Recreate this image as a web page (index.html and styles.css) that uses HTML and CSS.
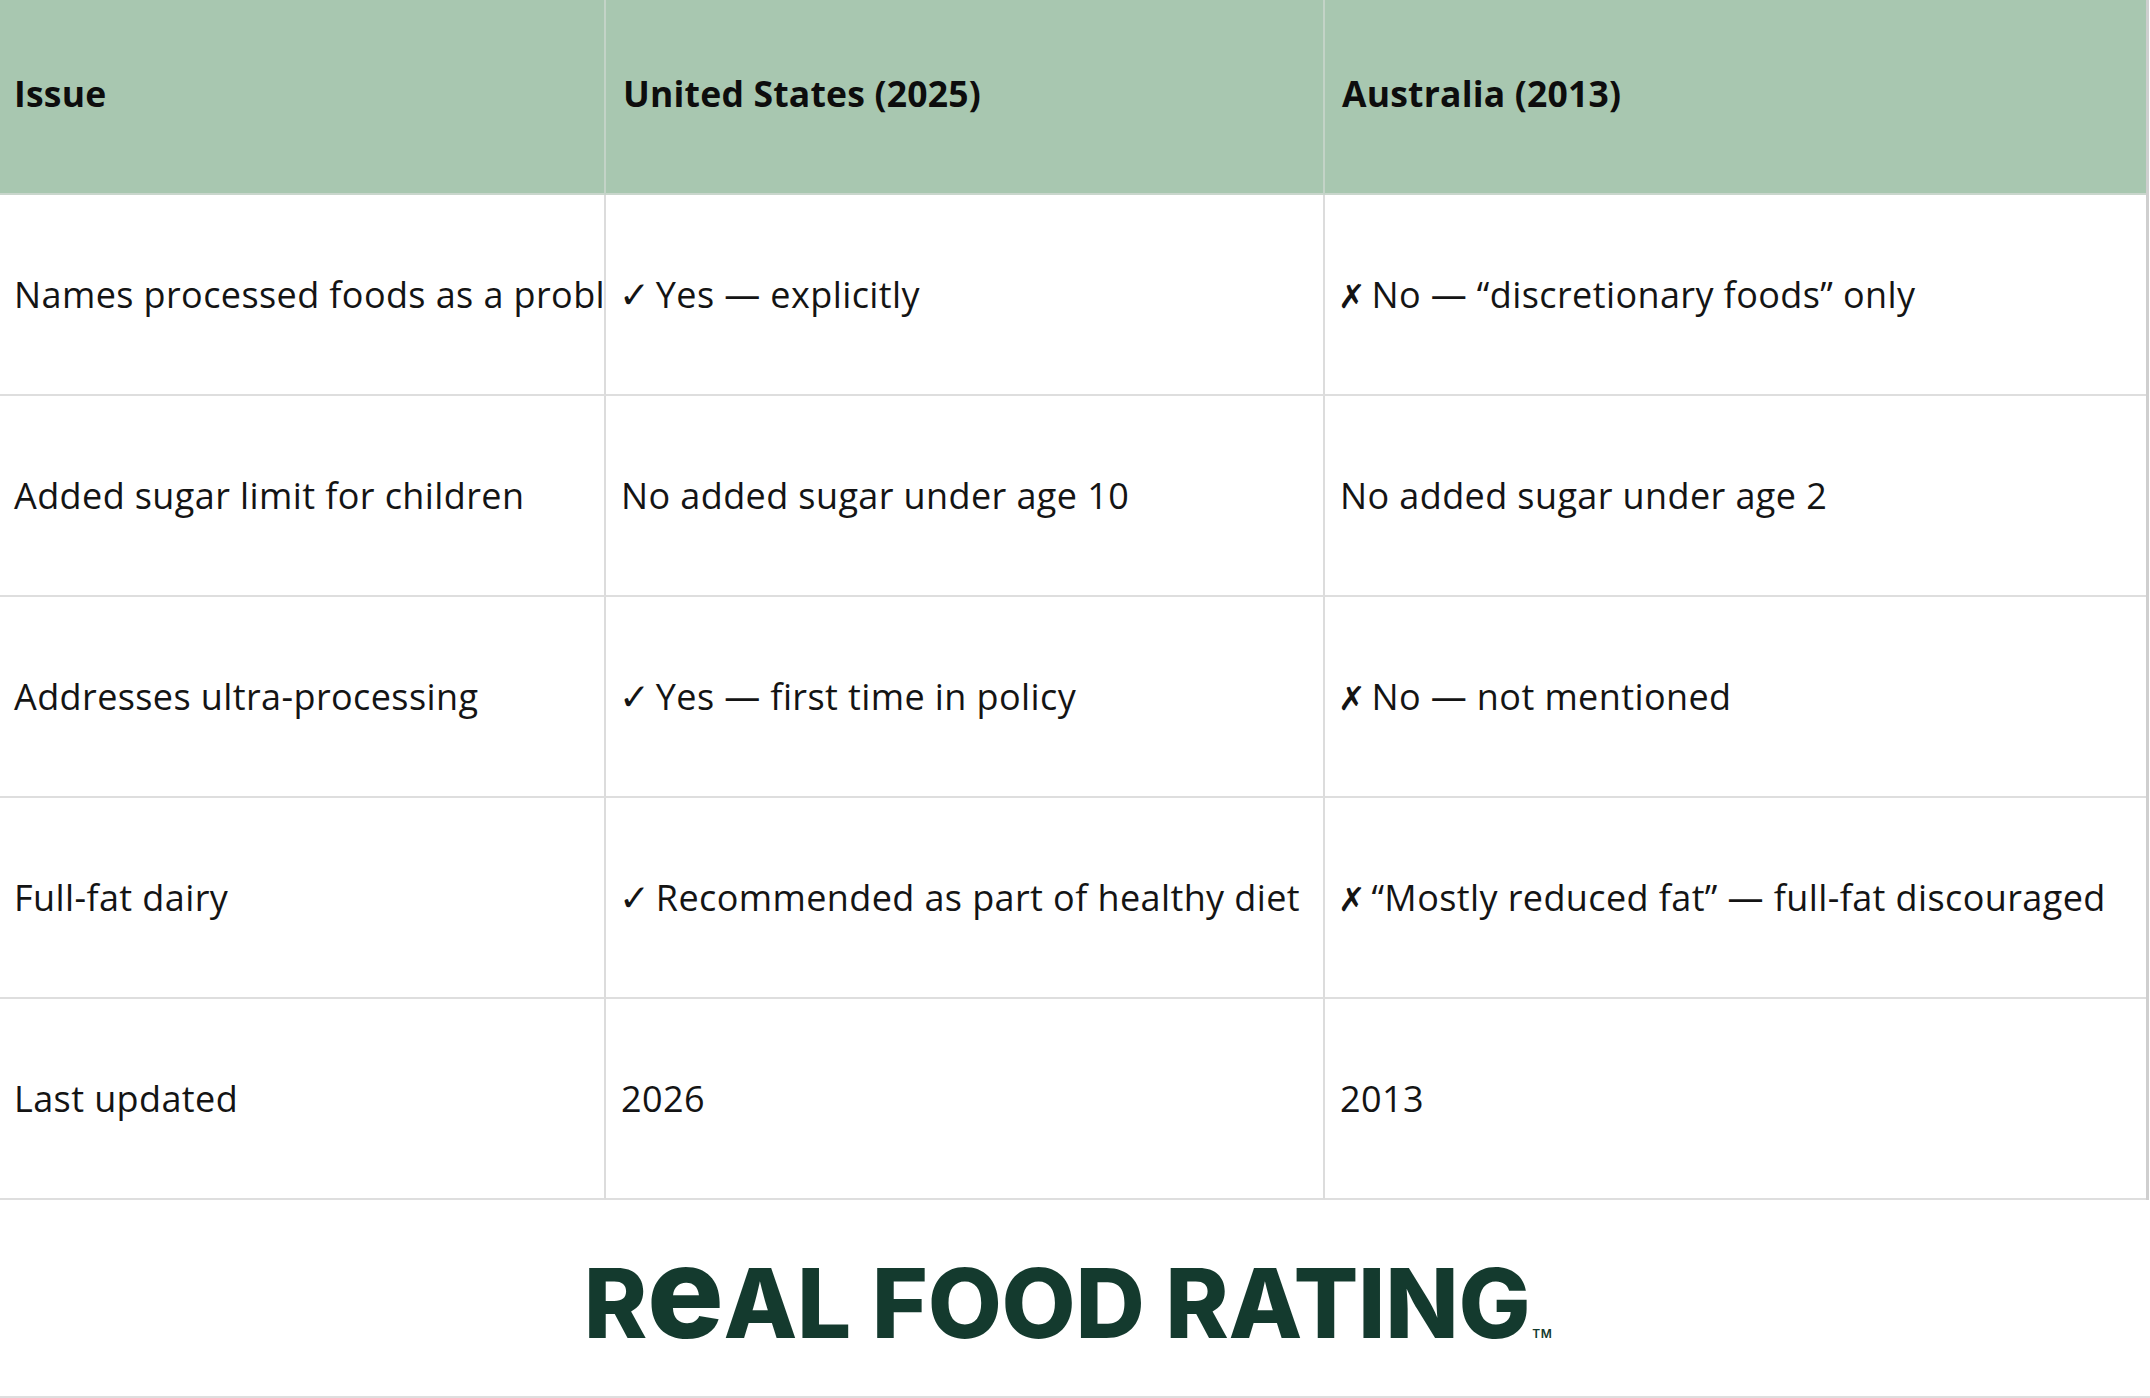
FILE: index.html
```html
<!DOCTYPE html>
<html lang="en">
<head>
<meta charset="utf-8">
<title>US vs Australia dietary guidelines</title>
<link rel="stylesheet" href="styles.css">
</head>
<body>
<div class="page">
  <div class="table">
    <div class="cell head first"><span>Issue</span></div>
    <div class="cell head"><span>United States (2025)</span></div>
    <div class="cell head last"><span>Australia (2013)</span></div>

    <div class="cell first"><span>Names processed foods as a problem</span></div>
    <div class="cell"><span><span class="mark">✓</span> Yes — explicitly</span></div>
    <div class="cell last"><span><span class="mark cross">✗</span> No — “discretionary foods” only</span></div>

    <div class="cell first"><span>Added sugar limit for children</span></div>
    <div class="cell"><span>No added sugar under age 10</span></div>
    <div class="cell last"><span>No added sugar under age 2</span></div>

    <div class="cell first"><span>Addresses ultra-processing</span></div>
    <div class="cell"><span><span class="mark">✓</span> Yes — first time in policy</span></div>
    <div class="cell last"><span><span class="mark cross">✗</span> No — not mentioned</span></div>

    <div class="cell first"><span>Full-fat dairy</span></div>
    <div class="cell"><span><span class="mark">✓</span> Recommended as part of healthy diet</span></div>
    <div class="cell last"><span><span class="mark cross">✗</span> “Mostly reduced fat” — full-fat discouraged</span></div>

    <div class="cell first"><span>Last updated</span></div>
    <div class="cell"><span>2026</span></div>
    <div class="cell last"><span>2013</span></div>
  </div>
  <div class="footer">
    <div class="logo">R<span class="logo-e">e</span>AL FOOD RATING<span class="tm">TM</span></div>
  </div>
</div>
</body>
</html>
```
FILE: styles.css
```css
html, body {
  margin: 0;
  padding: 0;
  background: #ffffff;
}

body {
  font-family: "Open Sans", "Liberation Sans", "DejaVu Sans", sans-serif;
  color: #141414;
}

.page {
  width: 2150px;
  height: 1398px;
  overflow: hidden;
  display: flex;
  flex-direction: column;
}

.table {
  display: grid;
  grid-template-columns: 606px 719px 821px;
  grid-template-rows: 195px repeat(5, 201px);
  width: 2146px;
  border-right: 3px solid #cfcfcf;
}

.cell {
  display: flex;
  align-items: center;
  padding: 0 0 0 15px;
  white-space: nowrap;
  overflow: hidden;
  font-size: 36px;
  letter-spacing: 0.4px;
  border-bottom: 2px solid #dedede;
  border-right: 2px solid #dcdcdc;
  box-sizing: border-box;
}

.cell.first {
  padding-left: 14px;
}

.cell.last {
  border-right: none;
}

.head {
  background: #a8c7b0;
  font-weight: 700;
  font-size: 35.5px;
  color: #0d0d0d;
  letter-spacing: 0.2px;
  padding-left: 17px;
  padding-bottom: 8px;
  border-bottom: 2px solid #c9d6cc;
  border-right-color: #c3d3c7;
}

.head.first {
  padding-left: 14px;
}

.mark {
  font-family: "DejaVu Sans", sans-serif;
  font-size: 37px;
  letter-spacing: 0;
  margin-left: -2px;
  margin-right: -4px;
}

.mark.cross {
  font-size: 33px;
}

.footer {
  flex: 1;
  display: flex;
  align-items: center;
  justify-content: center;
  border-bottom: 2px solid #dedede;
  padding-top: 10px;
}

.logo {
  font-family: "Inter", "Liberation Sans", sans-serif;
  font-weight: 800;
  font-size: 96px;
  line-height: 1;
  color: #143a2e;
  letter-spacing: -0.3px;
  white-space: nowrap;
  margin-right: 14px;
}

.logo-e {
  font-size: 128px;
  line-height: 0;
}

.tm {
  font-size: 12px;
  font-weight: 600;
  margin-left: 2px;
  letter-spacing: 0.5px;
}
```
